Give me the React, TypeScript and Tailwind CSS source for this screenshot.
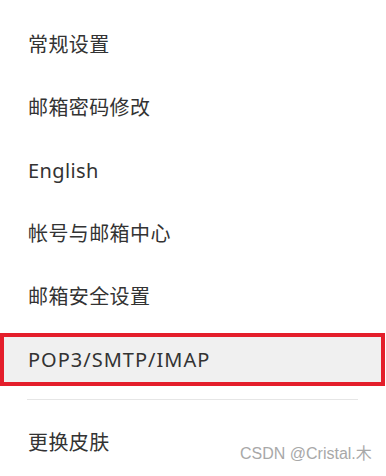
import React from "react";

const items = ["常规设置", "邮箱密码修改", "English", "帐号与邮箱中心", "邮箱安全设置"];

export default function App() {
  return (
    <div
      className="relative w-[386px] h-[476px] bg-white overflow-hidden text-[#333333]"
      style={{ fontFamily: '"Noto Sans", "Noto Sans CJK SC", sans-serif' }}
    >
      <div className="flex flex-col gap-[10px] pt-[18px]">
        {items.map((t) => (
          <div key={t} className="h-[53px] flex items-center pl-[28px] text-[20px] leading-none tracking-[0.4px]">
            {t}
          </div>
        ))}
        <div className="h-[53px] w-[385px] flex items-center pl-[24px] text-[20px] leading-none tracking-[1px] bg-[#f0f0f0] border-[4px] border-[#e41e2b]">
          POP3/SMTP/IMAP
        </div>
      </div>
      <div className="ml-[27px] w-[331px] h-px bg-[#e6e6e6] mt-[13px]" />
      <div className="h-[53px] mt-[16px] flex items-center pl-[28px] text-[20px] leading-none tracking-[0.4px]">
        更换皮肤
      </div>
      <div
        className="absolute left-[240px] top-[446px] text-[16px] text-[#a8a8a8] leading-none"
        style={{ fontFamily: '"Liberation Sans", "Noto Sans CJK SC", sans-serif' }}
      >
        CSDN @Cristal.木
      </div>
    </div>
  );
}
